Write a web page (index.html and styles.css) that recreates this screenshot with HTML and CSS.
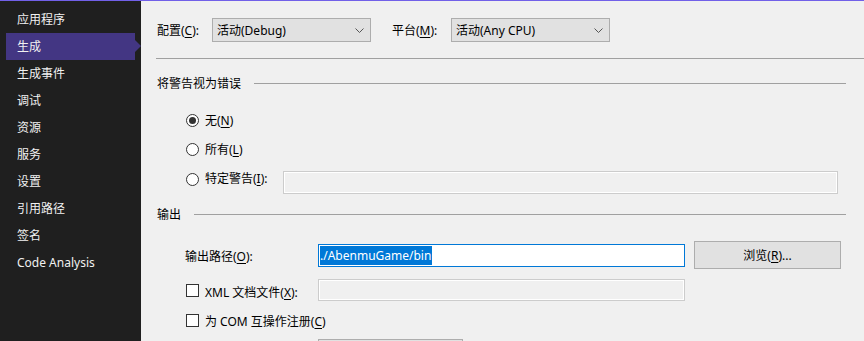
FILE: index.html
```html
<!DOCTYPE html>
<html lang="zh-CN">
<head>
  <meta charset="UTF-8">
  <meta name="viewport" content="width=device-width, initial-scale=1.0">
  <title>项目属性 - 生成</title>
  <link rel="stylesheet" href="styles.css">
</head>
<body>
  <div id="wrapper">
    <nav class="sidebar">
      <div class="nav-item">应用程序</div>
      <div class="nav-item active">生成</div>
      <div class="nav-item">生成事件</div>
      <div class="nav-item">调试</div>
      <div class="nav-item">资源</div>
      <div class="nav-item">服务</div>
      <div class="nav-item">设置</div>
      <div class="nav-item">引用路径</div>
      <div class="nav-item">签名</div>
      <div class="nav-item">Code Analysis</div>
    </nav>

    <main class="content">
      <div class="config-row">
        <span class="config-label">配置(<u>C</u>):</span>
        <div class="combo">
          <span>活动(Debug)</span>
          <svg class="chevron" width="9" height="5" viewBox="0 0 9 5"><path d="M0.5 0.5 L4.5 4.5 L8.5 0.5" fill="none" stroke="#555" stroke-width="1"/></svg>
        </div>
        <span class="config-label platform">平台(<u>M</u>):</span>
        <div class="combo">
          <span>活动(Any CPU)</span>
          <svg class="chevron" width="9" height="5" viewBox="0 0 9 5"><path d="M0.5 0.5 L4.5 4.5 L8.5 0.5" fill="none" stroke="#555" stroke-width="1"/></svg>
        </div>
      </div>

      <div class="separator"></div>

      <div class="group-header">
        <span>将警告视为错误</span>
        <div class="group-line"></div>
      </div>

      <div class="option-row first">
        <span class="radio checked"></span>
        <span>无(<u>N</u>)</span>
      </div>
      <div class="option-row">
        <span class="radio"></span>
        <span>所有(<u>L</u>)</span>
      </div>
      <div class="option-row warn-row">
        <span class="radio"></span>
        <span class="warn-label">特定警告(<u>I</u>):</span>
        <div class="textbox disabled warn-box"></div>
      </div>

      <div class="group-header output-header">
        <span>输出</span>
        <div class="group-line"></div>
      </div>

      <div class="path-row">
        <span class="path-label">输出路径(<u>O</u>):</span>
        <div class="textbox focused"><span class="selection">./AbenmuGame/bin</span></div>
        <div class="button">浏览(<u>R</u>)...</div>
      </div>

      <div class="check-row xml-row">
        <span class="checkbox"></span>
        <span class="xml-label">XML 文档文件(<u>X</u>):</span>
        <div class="textbox disabled"></div>
      </div>

      <div class="check-row com-row">
        <span class="checkbox"></span>
        <span>为 COM 互操作注册(<u>C</u>)</span>
      </div>

      <div class="bottom-box"></div>
    </main>
  </div>
</body>
</html>
```

FILE: styles.css
```css
*, *::before, *::after { box-sizing: border-box; }
html, body {
  margin: 0;
  padding: 0;
  height: 100%;
  overflow: hidden;
  font-family: 'Noto Sans', 'Noto Sans CJK SC', sans-serif;
  font-size: 12px;
  color: #000;
}
#wrapper {
  display: flex;
  height: 100%;
  border-top: 1px solid #7160e8;
  background: #f0f0f0;
}
u { text-decoration-thickness: 1px; text-underline-offset: 2px; }

/* sidebar */
.sidebar {
  width: 141px;
  flex-shrink: 0;
  background: #1f1f1f;
  padding-top: 5px;
}
.nav-item {
  position: relative;
  height: 27px;
  line-height: 27px;
  margin-left: 6px;
  width: 129px;
  padding-left: 11px;
  color: #f1f1f1;
  white-space: nowrap;
}
.nav-item.active {
  background: #433683;
}
.nav-item.active::after {
  content: '';
  position: absolute;
  right: -6px;
  top: 7px;
  border-left: 6px solid #433683;
  border-top: 6.5px solid transparent;
  border-bottom: 6.5px solid transparent;
}

/* content */
.content {
  flex: 1;
  overflow: hidden;
  padding-top: 17px;
  padding-left: 16px;
}
.config-row {
  display: flex;
  align-items: center;
  height: 24px;
}
.config-label { width: 55px; }
.config-label.platform { width: 59px; margin-left: 21px; }
.combo {
  width: 159px;
  height: 24px;
  display: flex;
  align-items: center;
  justify-content: space-between;
  padding: 0 5px 0 4px;
  background: #e1e1e1;
  border: 1px solid #adadad;
}
.combo .chevron { margin-right: 1px; }

.separator {
  margin-top: 16px;
  margin-left: -1px;
  border-top: 1px solid #a0a0a0;
}
.group-header {
  display: flex;
  align-items: center;
  gap: 13px;
  height: 20px;
  margin-top: 14px;
  margin-right: 18px;
}
.group-line {
  flex: 1;
  border-top: 1px solid #a0a0a0;
}
.output-header { margin-top: 10px; }

.option-row {
  display: flex;
  align-items: center;
  gap: 6px;
  height: 22px;
  margin-left: 29px;
  margin-top: 7px;
}
.option-row.first { margin-top: 16px; }
.option-row.warn-row {
  align-items: flex-start;
  height: 23px;
  margin-top: 11px;
  line-height: 16px;
  margin-right: 26px;
}
.warn-row .radio { margin-top: 2px; }
.warn-label { width: 72px; }
.warn-box { flex: 1; height: 23px; }

.radio {
  width: 13px;
  height: 13px;
  border: 1px solid #333;
  border-radius: 50%;
  background: #fff;
  display: flex;
  align-items: center;
  justify-content: center;
}
.radio.checked::after {
  content: '';
  width: 7px;
  height: 7px;
  border-radius: 50%;
  background: #333;
}
.checkbox {
  width: 13px;
  height: 13px;
  border: 1px solid #333;
  background: #fff;
}

.textbox {
  width: 367px;
  background: #fff;
  border: 1px solid #7a7a7a;
}
.textbox.disabled {
  background: #f0f0f0;
  border: 1px solid #cccccc;
  box-shadow: inset 0 0 0 1px #fff;
}
.textbox.focused {
  height: 23px;
  border-color: #0078d7;
  padding: 1px 0 0 1px;
  display: flex;
}
.selection {
  background: #0078d7;
  color: #fff;
  height: 19px;
  line-height: 19px;
  padding-right: 1px;
}

.path-row {
  display: flex;
  align-items: center;
  height: 28px;
  margin-top: 17px;
  margin-left: 28px;
}
.path-label { width: 133px; padding-top: 2px; }
.button {
  width: 147px;
  height: 28px;
  margin-left: 9px;
  background: #e1e1e1;
  border: 1px solid #adadad;
  display: flex;
  align-items: center;
  justify-content: center;
}

.check-row {
  display: flex;
  align-items: center;
  gap: 6px;
  height: 22px;
  margin-left: 29px;
}
.xml-row { margin-top: 10px; }
.xml-row .textbox { height: 22px; }
.xml-label { width: 107px; padding-top: 3px; }
.com-row { margin-top: 8px; }
.com-row span:last-child { padding-top: 1px; }

.bottom-box {
  margin-top: 8px;
  margin-left: 161px;
  width: 145px;
  height: 28px;
  background: #e1e1e1;
  border: 1px solid #adadad;
}
```
